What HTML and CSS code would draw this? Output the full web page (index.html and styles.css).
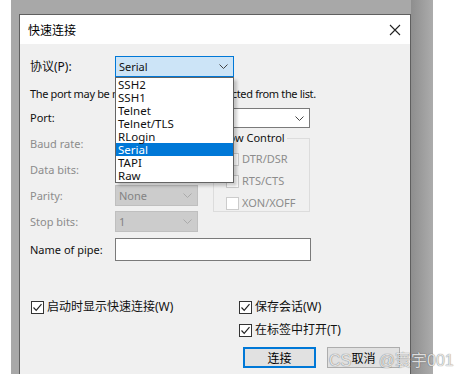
FILE: index.html
```html
<!DOCTYPE html>
<html lang="zh-CN">
<head>
  <meta charset="UTF-8">
  <meta name="viewport" content="width=device-width, initial-scale=1.0">
  <title>快速连接</title>
  <link rel="stylesheet" href="styles.css">
</head>
<body>
  <div class="backdrop">
    <div class="dialog">
      <div class="titlebar">
        <span class="title">快速连接</span>
        <svg class="close" width="12" height="12" viewBox="0 0 12 12">
          <path d="M1 1 L11 11 M11 1 L1 11" stroke="#222" stroke-width="1.1" fill="none"/>
        </svg>
      </div>

      <div class="content">
        <!-- 协议 + 下拉列表 -->
        <div class="row row-protocol">
          <label class="label zh">协议(P):</label>
          <div class="combo combo-active">
            <span>Serial</span>
            <svg class="chevron" width="9" height="5" viewBox="0 0 9 5"><polyline points="0.5,0.5 4.5,4.5 8.5,0.5" fill="none" stroke="#444" stroke-width="1"/></svg>
          </div>
          <ul class="dropdown">
            <li>SSH2</li>
            <li>SSH1</li>
            <li>Telnet</li>
            <li>Telnet/TLS</li>
            <li>RLogin</li>
            <li class="selected">Serial</li>
            <li>TAPI</li>
            <li>Raw</li>
          </ul>
        </div>

        <p class="note">The port may be manually entered or selected from the list.</p>

        <div class="row row-port">
          <label class="label">Port:</label>
          <div class="combo combo-port">
            <span></span>
            <svg class="chevron" width="9" height="5" viewBox="0 0 9 5"><polyline points="0.5,0.5 4.5,4.5 8.5,0.5" fill="none" stroke="#444" stroke-width="1"/></svg>
          </div>
        </div>

        <div class="serial-grid">
          <div class="serial-fields">
            <div class="row">
              <label class="label disabled">Baud rate:</label>
              <div class="combo combo-disabled"><span>9600</span><svg class="chevron" width="9" height="5" viewBox="0 0 9 5"><polyline points="0.5,0.5 4.5,4.5 8.5,0.5" fill="none" stroke="#aaa" stroke-width="1"/></svg></div>
            </div>
            <div class="row">
              <label class="label disabled">Data bits:</label>
              <div class="combo combo-disabled"><span>8</span><svg class="chevron" width="9" height="5" viewBox="0 0 9 5"><polyline points="0.5,0.5 4.5,4.5 8.5,0.5" fill="none" stroke="#aaa" stroke-width="1"/></svg></div>
            </div>
            <div class="row">
              <label class="label disabled">Parity:</label>
              <div class="combo combo-disabled"><span>None</span><svg class="chevron" width="9" height="5" viewBox="0 0 9 5"><polyline points="0.5,0.5 4.5,4.5 8.5,0.5" fill="none" stroke="#aaa" stroke-width="1"/></svg></div>
            </div>
            <div class="row">
              <label class="label disabled">Stop bits:</label>
              <div class="combo combo-disabled"><span>1</span><svg class="chevron" width="9" height="5" viewBox="0 0 9 5"><polyline points="0.5,0.5 4.5,4.5 8.5,0.5" fill="none" stroke="#aaa" stroke-width="1"/></svg></div>
            </div>
          </div>

          <fieldset class="flow">
            <legend>Flow Control</legend>
            <div class="check disabled"><span class="box"></span>DTR/DSR</div>
            <div class="check disabled"><span class="box"></span>RTS/CTS</div>
            <div class="check disabled"><span class="box"></span>XON/XOFF</div>
          </fieldset>
        </div>

        <div class="row row-pipe">
          <label class="label">Name of pipe:</label>
          <div class="textbox"></div>
        </div>

        <div class="options">
          <div class="options-left">
            <div class="check zh"><span class="box checked"><svg width="11" height="11" viewBox="0 0 11 11"><polyline points="1.5,5.5 4.2,8.3 9.5,2.2" fill="none" stroke="#222" stroke-width="1.2"/></svg></span>启动时显示快速连接(W)</div>
          </div>
          <div class="options-right">
            <div class="check zh"><span class="box checked"><svg width="11" height="11" viewBox="0 0 11 11"><polyline points="1.5,5.5 4.2,8.3 9.5,2.2" fill="none" stroke="#222" stroke-width="1.2"/></svg></span>保存会话(W)</div>
            <div class="check zh"><span class="box checked"><svg width="11" height="11" viewBox="0 0 11 11"><polyline points="1.5,5.5 4.2,8.3 9.5,2.2" fill="none" stroke="#222" stroke-width="1.2"/></svg></span>在标签中打开(T)</div>
          </div>
        </div>

        <div class="buttons">
          <button class="btn btn-default">连接</button>
          <button class="btn">取消</button>
        </div>
      </div>
    </div>
  </div>

  <div class="watermark">CS<span class="wm-faint">DN</span> @寰宇001</div>
</body>
</html>
```

FILE: styles.css
```css
body {
  margin: 0;
  background: #fff;
  font-family: "Noto Sans", "Noto Sans CJK SC", sans-serif;
  font-size: 11px;
  color: #111;
  overflow: hidden;
  height: 374px;
}

.zh {
  font-size: 12px;
}

.backdrop {
  margin-left: 11px;
  width: 422px;
  height: 374px;
  padding: 14px 0 0 8px;
  box-sizing: border-box;
  overflow: hidden;
  background: linear-gradient(to right, #a8a8a8 0, #a8a8a8 400px, #8e8e8e 400px, #acacac 422px);
}

.dialog {
  width: 392px;
  height: 380px;
  box-sizing: border-box;
  border: 1px solid #5f5f5f;
  background: #f0f0f0;
}

.titlebar {
  height: 29px;
  background: #fff;
  display: flex;
  align-items: center;
  justify-content: space-between;
  padding: 0 8px;
}

.title {
  font-size: 12px;
  color: #000;
}

.close {
  margin-right: 1px;
}

.content {
  padding: 12px 10px 0 10px;
}

.row {
  display: flex;
  align-items: center;
}

.row-protocol {
  position: relative;
  height: 21px;
}

.label {
  width: 85px;
  flex: none;
  line-height: 14px;
}

.label.disabled {
  color: #8c8c8c;
}

.combo {
  box-sizing: border-box;
  height: 21px;
  display: flex;
  align-items: center;
  justify-content: space-between;
  padding: 0 5px 0 3px;
  border: 1px solid #7a7a7a;
  background: #fff;
  line-height: 14px;
}

.combo-active {
  width: 119px;
  background: #cce4f7;
  border-color: #0078d7;
}

.dropdown {
  position: absolute;
  left: 85px;
  top: 21px;
  width: 119px;
  box-sizing: border-box;
  margin: 0;
  padding: 0;
  list-style: none;
  background: #fff;
  border: 1px solid #646464;
  box-shadow: 3px 3px 3px rgba(0, 0, 0, 0.2);
  z-index: 5;
}

.dropdown li {
  height: 13px;
  line-height: 13px;
  padding-left: 2px;
  font-size: 11.5px;
}

.dropdown li.selected {
  background: #0078d7;
  color: #fff;
}

.note {
  margin: 10px 0 0 0;
  line-height: 14px;
  white-space: nowrap;
  letter-spacing: -0.35px;
}

.row-port {
  margin-top: 7px;
}

.combo-port {
  width: 195px;
  height: 20px;
}

.serial-grid {
  display: grid;
  grid-template-columns: 168px 97px;
  column-gap: 15px;
  margin-top: 5px;
}

.serial-fields {
  display: flex;
  flex-direction: column;
  gap: 5px;
}

.combo-disabled {
  width: 83px;
  background: #cccccc;
  border-color: #bfbfbf;
  color: #838383;
}

.flow {
  margin: -2px 0 0 0;
  padding: 3px 0 0 12px;
  height: 81px;
  box-sizing: border-box;
  border: 1px solid #dcdcdc;
  min-width: 0;
}

.flow legend {
  padding: 0 2px;
  margin-left: -8px;
  line-height: 14px;
}

.check {
  display: flex;
  align-items: center;
  height: 16px;
  line-height: 16px;
  white-space: nowrap;
}

.flow .check {
  height: 22px;
}

.check.disabled {
  color: #8c8c8c;
}

.box {
  width: 13px;
  height: 13px;
  box-sizing: border-box;
  border: 1px solid #cccccc;
  background: #fff;
  margin-right: 3px;
  display: flex;
  align-items: center;
  justify-content: center;
  flex: none;
}

.box.checked {
  border-color: #333;
}

.row-pipe {
  margin-top: 6px;
}

.textbox {
  width: 196px;
  height: 23px;
  box-sizing: border-box;
  border: 1px solid #7a7a7a;
  background: #fff;
}

.options {
  display: flex;
  margin-top: 38px;
}

.options-left {
  width: 208px;
  padding-left: 1px;
}

.options-right {
  display: flex;
  flex-direction: column;
  gap: 7px;
}

.buttons {
  display: flex;
  justify-content: flex-end;
  gap: 11px;
  margin-top: 9px;
}

.btn {
  width: 73px;
  height: 21px;
  box-sizing: border-box;
  border: 1px solid #adadad;
  background: #e1e1e1;
  font-family: "Noto Sans", "Noto Sans CJK SC", sans-serif;
  font-size: 12px;
  color: #000;
  padding: 0;
}

.btn-default {
  border: 2px solid #0078d7;
}

.watermark {
  position: absolute;
  left: 329px;
  top: 347px;
  font-family: "Liberation Sans", "Noto Sans CJK SC", sans-serif;
  font-size: 16px;
  color: rgba(248, 248, 248, 0.85);
  text-shadow: 0 0 1px rgba(0, 0, 0, 0.4), 0 0 1px rgba(0, 0, 0, 0.3);
  z-index: 10;
}

.wm-faint {
  opacity: 0.12;
}
```
